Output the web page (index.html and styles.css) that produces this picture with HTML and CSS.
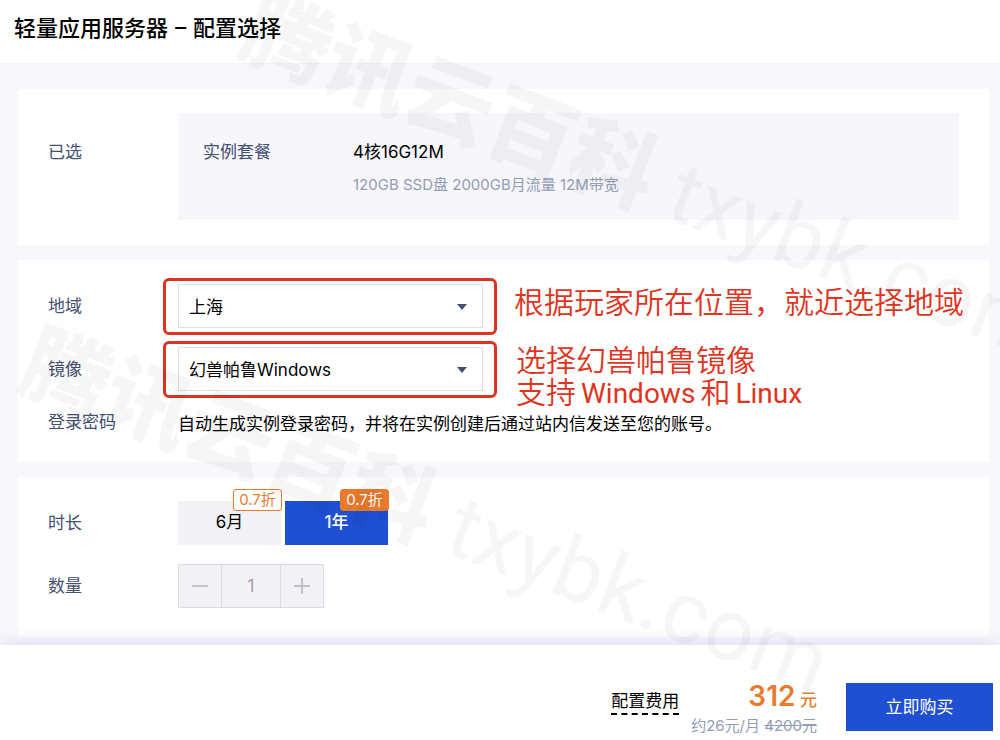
FILE: index.html
```html
<!DOCTYPE html>
<html lang="zh-CN">

<head>
    <meta charset="utf-8">
    <meta name="viewport" content="width=device-width, initial-scale=1">
    <title>轻量应用服务器 – 配置选择</title>

    <link rel="stylesheet" href="styles.css">
</head>

<body>

    <header class="header">
        <h1>轻量应用服务器 – 配置选择</h1>
    </header>

    <main class="main">
        <!-- 已选套餐 -->
        <section class="card">
            <div class="row picked">
                <span class="label">已选</span>
                <div class="package">
                    <span class="package-label">实例套餐</span>
                    <div class="package-info">
                        <p class="package-name">4核16G12M</p>
                        <p class="package-desc">120GB SSD盘 2000GB月流量 12M带宽</p>
                    </div>
                </div>
            </div>
        </section>

        <!-- 地域和镜像 -->
        <section class="card">
            <div class="row">
                <label class="label" for="region">地域</label>
                <div class="field marked">
                    <select class="select" id="region">
                        <option>上海</option>
                    </select>
                    <svg class="arrow" viewBox="0 0 10 6" aria-hidden="true"><path d="M0 0h10L5 6z"/></svg>
                    <p class="note">根据玩家所在位置，就近选择地域</p>
                </div>
            </div>
            <div class="row">
                <label class="label" for="image">镜像</label>
                <div class="field marked">
                    <select class="select" id="image">
                        <option>幻兽帕鲁Windows</option>
                    </select>
                    <svg class="arrow" viewBox="0 0 10 6" aria-hidden="true"><path d="M0 0h10L5 6z"/></svg>
                    <p class="note note-lines">选择幻兽帕鲁镜像<br>支持<span class="latin">Windows</span>和<span class="latin">Linux</span></p>
                </div>
            </div>
            <div class="row row-text">
                <span class="label">登录密码</span>
                <p class="tip">自动生成实例登录密码，并将在实例创建后通过站内信发送至您的账号。</p>
            </div>
        </section>

        <!-- 时长和数量 -->
        <section class="card">
            <div class="row">
                <span class="label" id="period">时长</span>
                <div class="periods" role="group" aria-labelledby="period">
                    <button class="period" type="button">6月<span class="badge">0.7折</span></button>
                    <button class="period active" type="button">1年<span class="badge">0.7折</span></button>
                </div>
            </div>
            <div class="row">
                <label class="label" for="count">数量</label>
                <div class="stepper">
                    <button type="button" aria-label="减少" disabled>
                        <svg viewBox="0 0 16 16"><path d="M0 8h16"/></svg>
                    </button>
                    <input id="count" type="text" value="1" disabled>
                    <button type="button" aria-label="增加" disabled>
                        <svg viewBox="0 0 16 16"><path d="M0 8h16M8 0v16"/></svg>
                    </button>
                </div>
            </div>
        </section>
    </main>

    <footer class="footer">
        <span class="fee">配置费用</span>
        <div class="price">
            <p class="price-now"><strong>312</strong> 元</p>
            <p class="price-old">约26元/月 <del>4200元</del></p>
        </div>
        <button class="buy" type="button">立即购买</button>
    </footer>

    <!-- 水印 -->
    <div class="watermarks" aria-hidden="true">
        <div class="watermark first"><b>腾讯云百科</b> txybk.com</div>
        <div class="watermark second"><b>腾讯云百科</b> txybk.com</div>
    </div>

</body>

</html>
```

FILE: styles.css
```css
* {
    box-sizing: border-box;
}

body {
    position: relative;
    display: flex;
    flex-direction: column;
    min-height: 100vh;
    margin: 0;
    background-color: #f8f8fc;
    color: #000;
    font-family: Inter, "Noto Sans CJK SC", sans-serif;
    font-size: 17px;
    line-height: 24px;
}

h1,
p {
    margin: 0;
}

button,
input,
select {
    font: inherit;
}

.header {
    padding: 17px 14px 22px;
    border-bottom: 1px solid #f3f3f8;
    background-color: #fff;
}

.header h1 {
    font-family: Roboto, "Noto Sans CJK SC", sans-serif;
    font-size: 22px;
    font-weight: 500;
    line-height: 24px;
}

.main {
    display: flex;
    flex: 1;
    flex-direction: column;
    gap: 15px;
    padding: 25px 11px 8px 18px;
}

.card {
    display: flex;
    flex-direction: column;
    gap: 19px;
    padding: 24px 30px;
    background-color: #fff;
}

.card:first-child {
    padding-bottom: 25px;
}

.card:last-child {
    padding-bottom: 29px;
}

.row {
    display: flex;
}

.label {
    flex: none;
    width: 130px;
    padding: 10px 0;
    color: #444f72;
}

.picked .label {
    padding-top: 27px;
}

.package {
    display: flex;
    flex: 1;
    padding: 27px 25px 23px;
    background-color: #f6f6fb;
}

.package-label {
    width: 150px;
    color: #444f72;
}

.package-desc {
    margin-top: 9px;
    color: #939cb6;
    font-size: 15px;
}

.field {
    position: relative;
    width: 305px;
    height: 44px;
}

.select {
    width: 100%;
    height: 100%;
    padding: 2px 10px 0;
    border: 1px solid #dcdfe9;
    border-radius: 0;
    background-color: #fff;
    color: #000;
    appearance: none;
}

.arrow {
    position: absolute;
    top: 20px;
    right: 16px;
    width: 10px;
    height: 6px;
    fill: #444f72;
    pointer-events: none;
}

/* 红框标注 */
.marked::after {
    content: "";
    position: absolute;
    inset: -6px -14px -7px -15px;
    border: 3px solid #dc3420;
    border-radius: 6px;
    pointer-events: none;
}

.note {
    position: absolute;
    top: 3px;
    left: 336px;
    color: #e0341e;
    font-family: Roboto, "Noto Sans CJK SC", sans-serif;
    font-size: 30px;
    font-weight: 350;
    line-height: 32px;
    white-space: nowrap;
}

.note-lines {
    top: -2px;
    left: 338px;
}

.latin {
    margin: 0 5px;
    font-size: 28px;
    font-weight: 400;
}

.row-text {
    margin-top: -10px;
}

.row-text .label {
    padding-bottom: 4px;
}

.tip {
    padding-top: 12px;
}

.periods {
    display: flex;
    gap: 4px;
}

.period {
    position: relative;
    width: 103px;
    height: 44px;
    padding: 0 0 2px;
    border: 0;
    background-color: #f1f1f6;
    color: #000;
}

.period.active {
    background-color: #1f4fd3;
    color: #fff;
    font-weight: 500;
}

.badge {
    position: absolute;
    top: -12px;
    right: -1px;
    width: 49px;
    border: 1px solid #ea7b2c;
    border-radius: 3px;
    background-color: #fff;
    color: #ea7b2c;
    font-size: 15px;
    font-weight: 400;
    line-height: 20px;
}

.active .badge {
    background-color: #ea7b2c;
    color: #fff;
}

.stepper {
    display: flex;
    height: 44px;
    border: 1px solid #dadce3;
    background-color: #f1f1f6;
}

.stepper button {
    display: flex;
    align-items: center;
    justify-content: center;
    width: 42px;
    padding: 0;
    border: 0;
    background: none;
}

.stepper svg {
    width: 16px;
    height: 16px;
    fill: none;
    stroke: #b0b4bf;
    stroke-width: 1.5;
}

.stepper input {
    width: 60px;
    padding: 0;
    border: 1px solid #dadce3;
    border-width: 0 1px;
    background: none;
    color: #9ea2ae;
    text-align: center;
}

.footer {
    position: sticky;
    bottom: 0;
    display: flex;
    align-items: center;
    justify-content: flex-end;
    padding: 33px 7px 4px;
    background-color: #fff;
    box-shadow: 0 -3px 16px rgba(70, 80, 150, 0.14);
}

.fee {
    margin-bottom: 10px;
    border-bottom: 2px dashed #000;
    line-height: 23px;
}

.price {
    margin-left: 12px;
    padding-top: 6px;
    text-align: right;
}

.price-now {
    color: #ea7b2c;
    font-weight: 500;
    line-height: 32px;
}

.price-now strong {
    font-size: 28px;
    font-weight: 600;
    line-height: 24px;
}

.price-old {
    color: #939cb6;
    font-size: 15px;
    line-height: 20px;
}

.buy {
    width: 147px;
    height: 48px;
    margin-left: 29px;
    border: 0;
    background-color: #1f4fd3;
    color: #fff;
}

.watermarks {
    position: absolute;
    inset: 0;
    overflow: hidden;
    pointer-events: none;
}

.watermark {
    position: absolute;
    color: rgba(0, 0, 0, 0.035);
    font-family: Roboto, "Noto Sans CJK SC", sans-serif;
    font-size: 87px;
    font-weight: 400;
    line-height: 100px;
    white-space: nowrap;
    transform: rotate(21deg);
    transform-origin: 0 50%;
}

.watermark b {
    font-weight: 900;
}

.first {
    top: -25px;
    left: 247px;
}

.second {
    top: 309px;
    left: 26px;
}
```
